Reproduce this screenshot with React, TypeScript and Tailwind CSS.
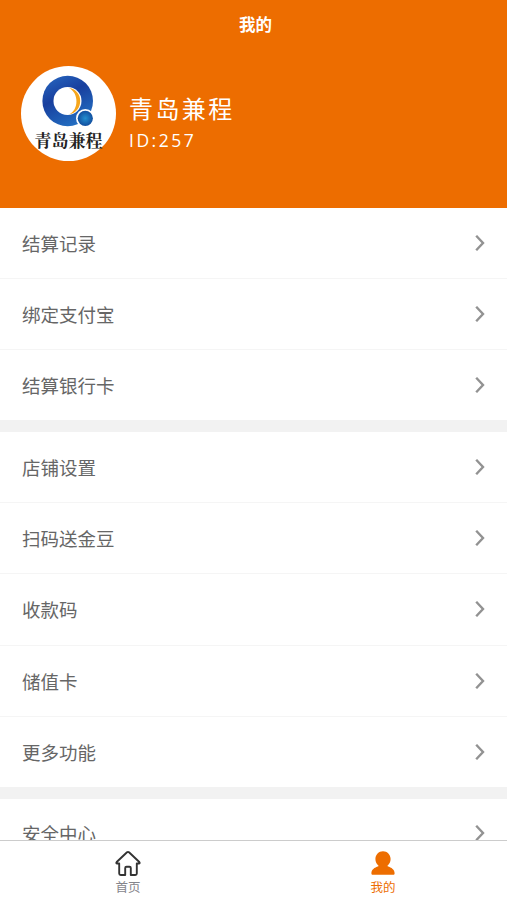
const groups = [
  ['结算记录', '绑定支付宝', '结算银行卡'],
  ['店铺设置', '扫码送金豆', '收款码', '储值卡', '更多功能'],
  ['安全中心'],
]

function Arrow() {
  return (
    <svg width="10" height="16" viewBox="0 0 10 16" fill="none" stroke="#929292" strokeWidth="2.4">
      <path d="M1.2 0.8 8 8 1.2 15.2" />
    </svg>
  )
}

function Avatar() {
  return (
    <svg width="95" height="95" viewBox="0 0 95 95" className="shrink-0">
      <defs>
        <linearGradient id="ring" x1="0.2" y1="0" x2="0.7" y2="1">
          <stop offset="0" stopColor="#2563bd" />
          <stop offset="0.4" stopColor="#183f9e" />
          <stop offset="1" stopColor="#2472c4" />
        </linearGradient>
        <radialGradient id="dot">
          <stop offset="0" stopColor="#238fd0" />
          <stop offset="1" stopColor="#124f9f" />
        </radialGradient>
      </defs>
      <circle cx="47.5" cy="47.5" r="47.5" fill="#fff" />
      <circle cx="46.7" cy="35" r="25.3" fill="url(#ring)" />
      <circle cx="46.5" cy="35" r="14" fill="#fff" />
      <path d="M48 22C63 24 63 46 48 48.5 58 44 58 27 48 22Z" fill="#f6a61c" />
      <circle cx="64.3" cy="52.3" r="9.3" fill="#fff" />
      <circle cx="64.3" cy="52.3" r="7.6" fill="url(#dot)" />
      <text
        x="47.5"
        y="80.5"
        textAnchor="middle"
        fontSize="17"
        fill="#222"
        className="font-['Noto_Serif_CJK_SC','Noto_Sans_CJK_SC',serif] font-bold"
      >
        青岛兼程
      </text>
    </svg>
  )
}

export default function App() {
  return (
    <div className="h-[900px] w-full flex flex-col overflow-hidden bg-white font-['Noto_Sans_CJK_SC',sans-serif]">
      <header className="h-[207.5px] shrink-0 bg-[#ed6d00] text-white">
        <h1 className="h-12 pl-1 text-center text-[16.5px] leading-[48px] font-bold">我的</h1>
        <div className="flex items-center gap-[13px] pl-[21px] pt-[18px]">
          <Avatar />
          <div className="pt-[18px]">
            <p className="text-[24px] leading-[34px] tracking-[2.4px]">青岛兼程</p>
            <p className="pt-px font-['Open_Sans',sans-serif] text-[17.5px] leading-[28px] tracking-[2.5px] font-medium">
              ID:257
            </p>
          </div>
        </div>
      </header>

      <main className="min-h-0 flex-1 overflow-hidden bg-[#f2f2f2] flex flex-col gap-3">
        {groups.map((items) => (
          <ul key={items[0]} className="shrink-0 bg-white">
            {items.map((item) => (
              <li
                key={item}
                className="box-content h-[70.25px] flex items-center justify-between px-[22px] border-b border-[#f5f5f5] last:h-[69.75px] last:border-b-0"
              >
                <span className="text-[18.5px] leading-[28px] text-[#666]">{item}</span>
                <Arrow />
              </li>
            ))}
          </ul>
        ))}
      </main>

      <nav className="h-[60px] shrink-0 border-t border-[#ccc] bg-white flex text-[12.5px] leading-[16px]">
        <a className="flex-1 flex flex-col items-center pt-[9px] pl-1 text-[#85858c]">
          <svg width="26" height="27" viewBox="0 0 26 27" fill="none" stroke="#333" strokeWidth="1.9" strokeLinejoin="round">
            <path d="M12 2.300q1-.8 2 0L24.300 12q1 1.300-.6 1.500h-1.900V23.500q0 1.500-1.500 1.500h-4.500v-7q0-1.300-1.300-1.300h-3q-1.300 0-1.300 1.300v7H5.700q-1.500 0-1.500-1.500V13.500H2.300q-1.600-.2-.6-1.500Z" />
          </svg>
          <span className="mt-[2px]">首页</span>
        </a>
        <a className="flex-1 flex flex-col items-center pt-[9px] pl-[7px] text-[#ed6d00]">
          <svg width="24" height="27" viewBox="0 0 24 27" fill="currentColor">
            <path d="M12 1.200c4.300 0 7.600 3.400 7.600 7.800 0 2.700-1.200 5-3 6.400v.8c4 1.300 7 3.500 7 7 0 1-.5 1.500-1.500 1.500H1.900c-1 0-1.500-.5-1.500-1.500 0-3.500 3-5.700 7-7v-.8c-1.800-1.400-3-3.700-3-6.400 0-4.400 3.300-7.800 7.600-7.800Z" />
          </svg>
          <span className="mt-[2px]">我的</span>
        </a>
      </nav>
    </div>
  )
}
